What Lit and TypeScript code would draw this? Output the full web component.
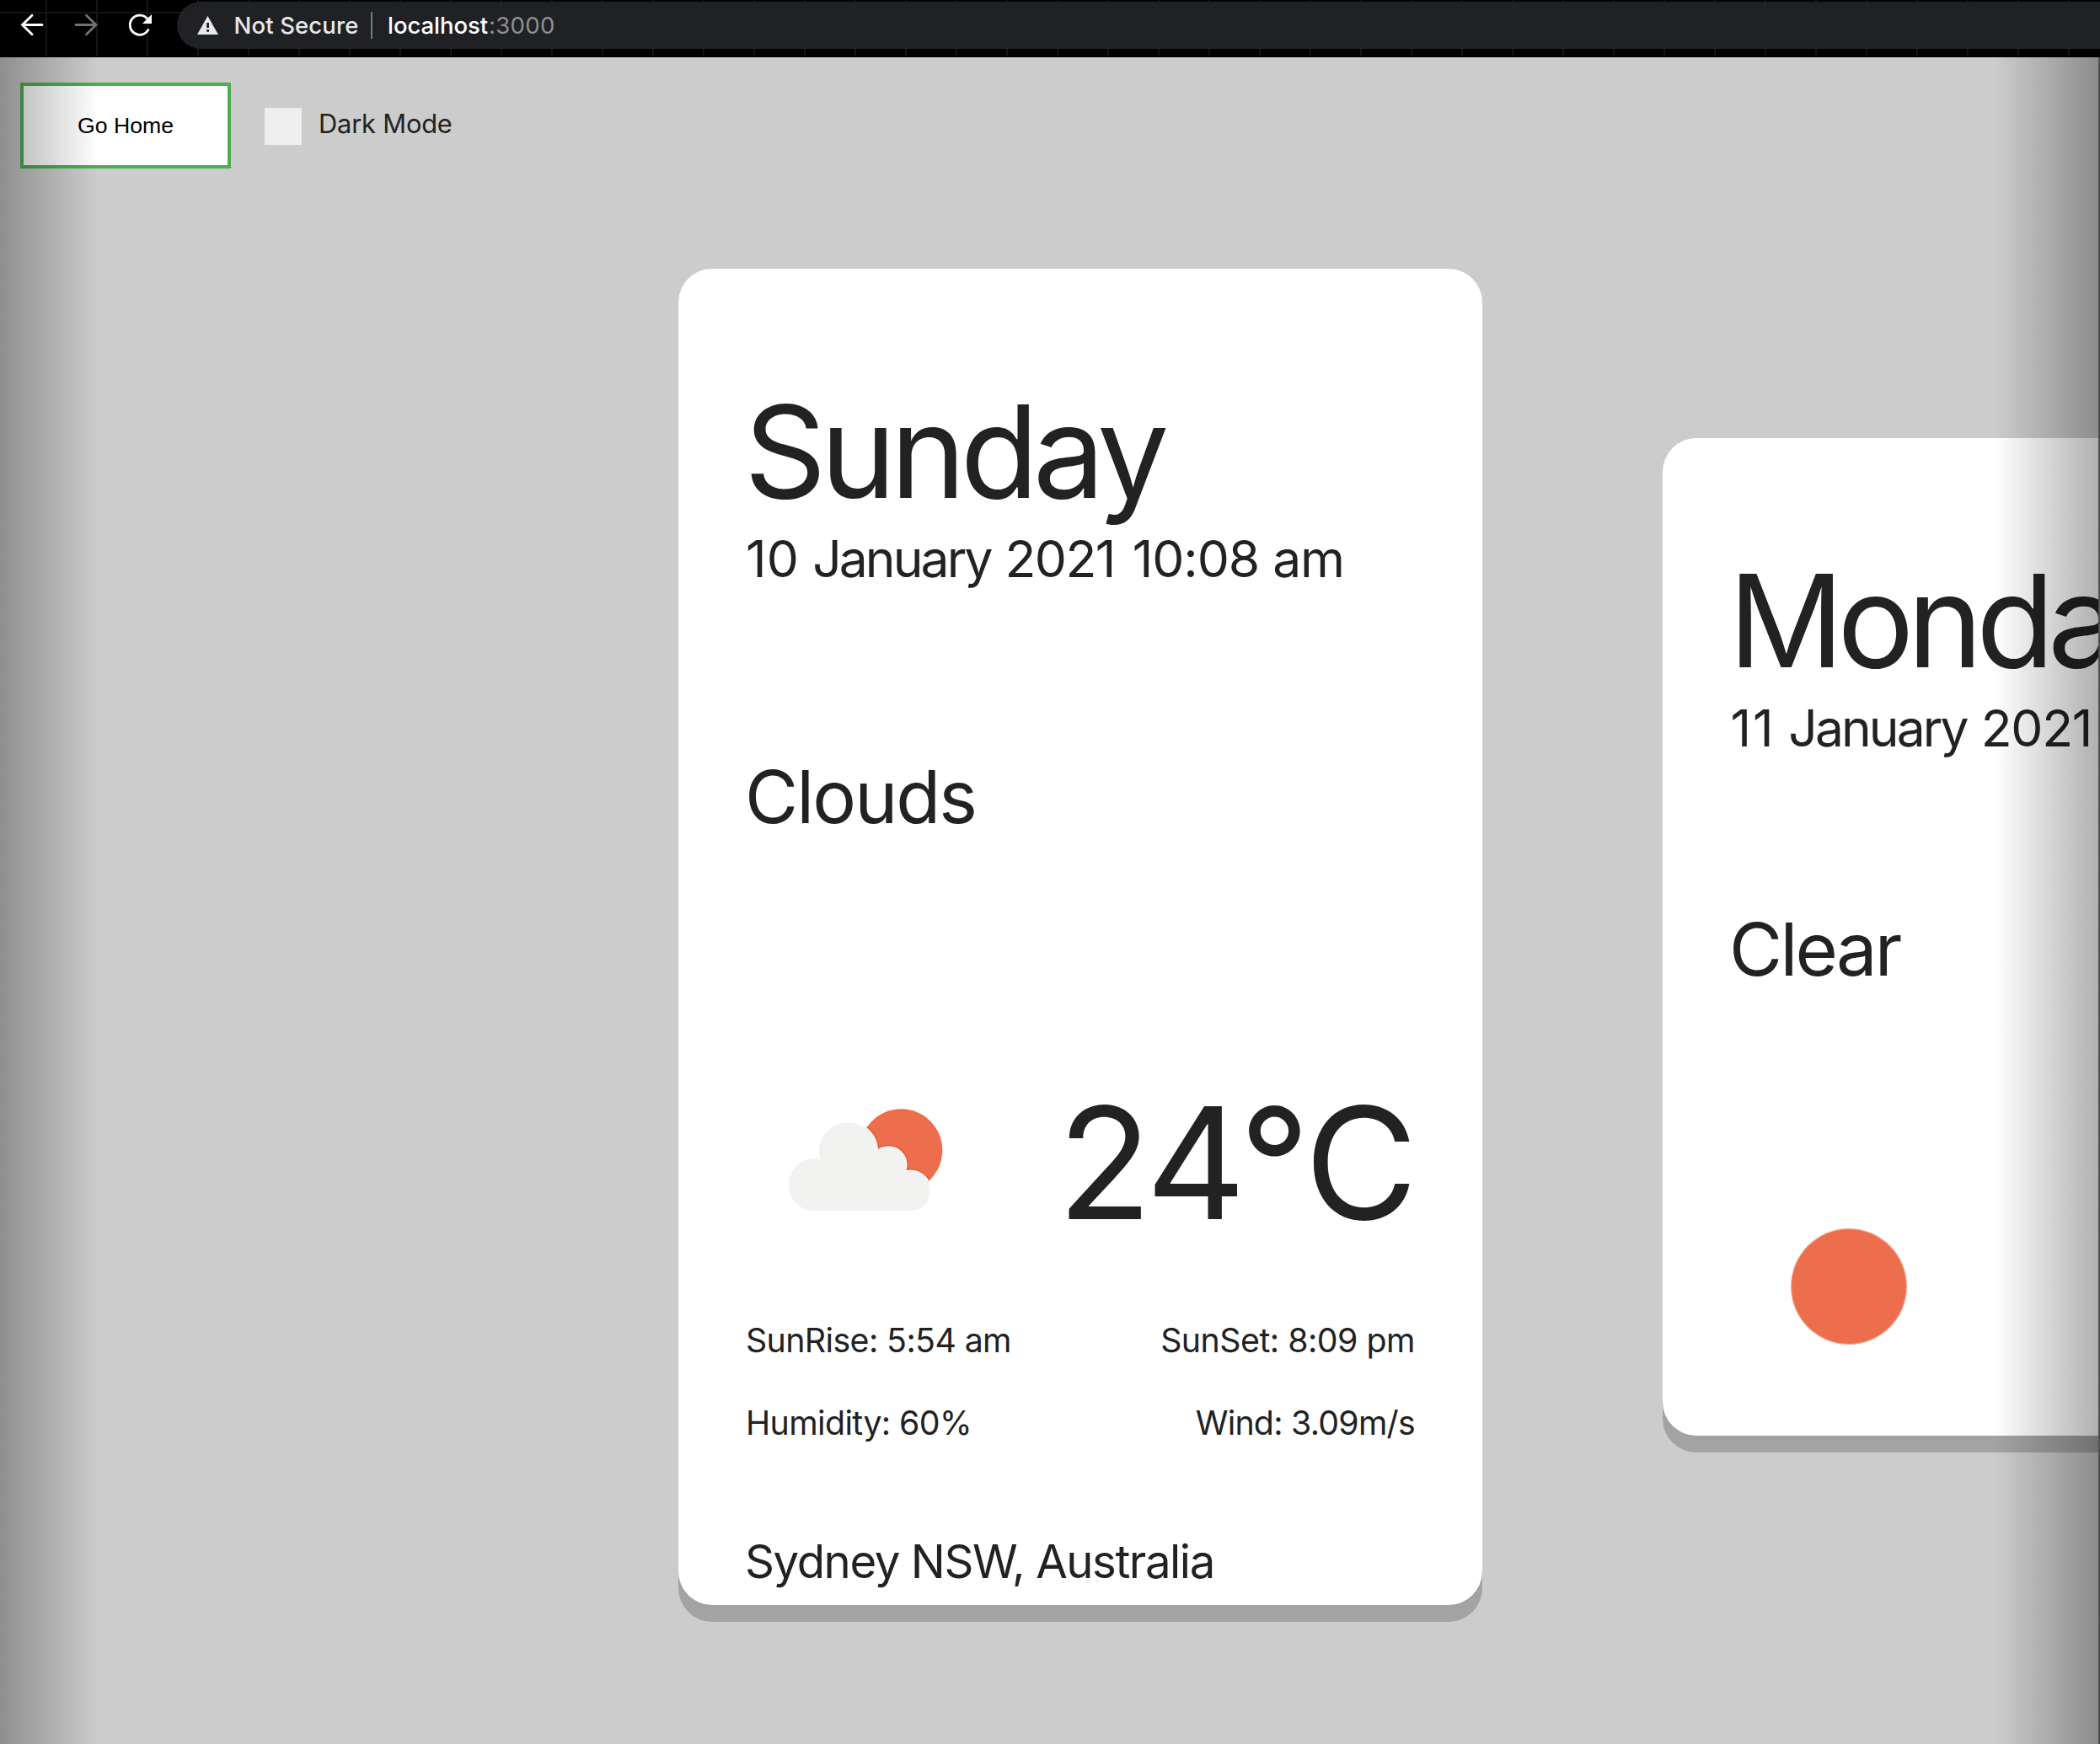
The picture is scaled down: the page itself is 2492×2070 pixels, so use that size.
import { LitElement, html, svg, css } from "lit";
import { customElement, property } from "lit/decorators.js";

interface Forecast {
  key: "sunday" | "monday";
  day: string;
  date: { dayOfMonth: string; month: string; year: string; time?: string };
  summary: string;
  temperature?: string;
  sunrise?: string;
  sunset?: string;
  humidity?: string;
  wind?: string;
  place?: string;
}

const forecasts: Forecast[] = [
  {
    key: "sunday",
    day: "Sunday",
    date: { dayOfMonth: "10", month: "January", year: "2021", time: "10:08 am" },
    summary: "Clouds",
    temperature: "24°C",
    sunrise: "5:54 am",
    sunset: "8:09 pm",
    humidity: "60%",
    wind: "3.09m/s",
    place: "Sydney NSW, Australia",
  },
  {
    key: "monday",
    day: "Monday",
    date: { dayOfMonth: "11", month: "January", year: "2021" },
    summary: "Clear",
  },
];

const cloudShapes = svg`
  <circle cx="200" cy="376" r="93"></circle>
  <circle cx="318" cy="257" r="103"></circle>
  <circle cx="463" cy="304" r="61"></circle>
  <circle cx="541" cy="398" r="70"></circle>
  <rect x="200" y="350" width="341" height="118.5"></rect>
  <rect x="300" y="285" width="163" height="90"></rect>
`;

const cloudySun = html`
  <svg class="icon cloudy" viewBox="0 0 780 570">
    <defs>
      <clipPath id="sun"><circle cx="508" cy="253" r="147"></circle></clipPath>
    </defs>
    <circle cx="508" cy="253" r="147" fill="#ec6e4c"></circle>
    <g clip-path="url(#sun)">
      <g fill="#ea5a36" stroke="#ea5a36" stroke-width="20">${cloudShapes}</g>
      <g fill="#f4fbfa" stroke="#f4fbfa" stroke-width="11">${cloudShapes}</g>
    </g>
    <g fill="#f2f2f0">${cloudShapes}</g>
  </svg>
`;

const clearSun = html`
  <svg class="icon clear" viewBox="0 0 140 140">
    <circle cx="70" cy="70" r="69" fill="#f3a58e"></circle>
    <circle cx="70" cy="70" r="67.8" fill="#ec6e4c"></circle>
  </svg>
`;

@customElement("browser-bar")
export class BrowserBar extends LitElement {
  static styles = css`
    :host {
      display: block;
      height: 68px;
      background:
        linear-gradient(#000, #000) 0 66px / 100% 2px no-repeat,
        linear-gradient(#151515, #151515) 0 14px / 100% 2px no-repeat,
        repeating-linear-gradient(90deg, transparent 0 54px, #151515 54px 56px, transparent 56px 60px),
        #000;
      font-family: Inter, "Liberation Sans", sans-serif;
      overflow: hidden;
    }
    .bar {
      display: flex;
      padding-top: 2px;
    }
    .nav {
      width: 210px;
      height: 56px;
      flex: none;
    }
    .address {
      flex: 1;
      height: 56px;
      border-radius: 28px 0 0 28px;
      background: #202124;
      display: flex;
      align-items: center;
      padding-left: 24px;
      box-sizing: border-box;
      font-size: 27.5px;
      line-height: 56px;
      white-space: pre;
    }
    .warning {
      width: 25px;
      height: 22px;
      margin-right: 18.5px;
    }
    .status {
      color: #e8e8e8;
      font-weight: 500;
      letter-spacing: 0.14px;
      width: 162.5px;
    }
    .divider {
      width: 2px;
      height: 32px;
      background: #77787a;
      margin-right: 18px;
    }
    .host {
      color: #fff;
      font-weight: 500;
      letter-spacing: -0.05px;
      width: 120px;
    }
    .port {
      color: #8f9092;
      letter-spacing: 0.35px;
    }
  `;

  render() {
    return html`
      <div class="bar">
        <svg class="nav" viewBox="0 2 210 56" fill="none" stroke-width="2.8" stroke-linecap="round">
          <path d="M50 29.5H27M38 18.3L26.5 29.5L38 40.7" stroke="#fff"></path>
          <path d="M90 29.5H113M102.5 18.3L114 29.5L102.5 40.7" stroke="#727272"></path>
          <path d="M176.4 34.5A11.6 11.6 0 1 1 175 22.5" stroke="#fff" stroke-linecap="butt"></path>
          <path d="M180 17V28H169Z" fill="#fff"></path>
        </svg>
        <div class="address">
          <svg class="warning" viewBox="0 0 25 22">
            <path d="M12.5 0L25 22H0Z" fill="#e8e8e8"></path>
            <path d="M11.2 8h2.8v6h-2.8zM11.2 16h2.8v2.7h-2.8z" fill="#202124"></path>
          </svg>
          <span class="status">Not Secure</span>
          <span class="divider"></span>
          <span class="host">localhost</span><span class="port">:3000</span>
        </div>
      </div>
    `;
  }
}

@customElement("weather-card")
export class WeatherCard extends LitElement {
  @property({ attribute: false }) forecast!: Forecast;

  static styles = css`
    :host {
      display: block;
      flex: none;
    }
    .card {
      box-sizing: border-box;
      width: 954px;
      padding: 124px 80px 0 79px;
      border-radius: 40px;
      background: #fff;
      box-shadow: 0 20px 0 rgba(0, 0, 0, 0.2);
      color: #222;
      white-space: nowrap;
    }
    .sunday {
      height: 1586px;
    }
    .monday {
      height: 1184px;
    }
    .day {
      font-size: 152px;
      line-height: 186px;
      letter-spacing: -6.9px;
      margin-left: -1px;
    }
    .date {
      font-size: 60.5px;
      line-height: 70px;
      letter-spacing: -1.05px;
      margin-top: -1px;
      margin-left: 1px;
    }
    .number {
      letter-spacing: 0.2px;
    }
    .month {
      letter-spacing: -2.9px;
      margin-right: 1px;
    }
    .year {
      letter-spacing: -1.6px;
      margin-right: 5px;
    }
    .summary {
      font-size: 86.5px;
      line-height: 100px;
      letter-spacing: -1.95px;
      margin-top: 198px;
    }
    .monday .day {
      letter-spacing: -8.1px;
    }
    .monday .date {
      margin-left: 1.5px;
    }
    .monday .number {
      letter-spacing: 1.8px;
    }
    .monday .year {
      letter-spacing: -1.3px;
    }
    .monday .summary {
      letter-spacing: -2.8px;
      margin-top: 178px;
    }
    .reading {
      display: flex;
      justify-content: space-between;
      align-items: flex-start;
      margin-top: 274px;
      height: 220px;
    }
    .monday .reading {
      margin-top: 280px;
    }
    .icon {
      display: block;
      flex: none;
    }
    .cloudy {
      width: 260px;
      height: 190px;
      margin: 11px 0 0 16px;
    }
    .clear {
      width: 140px;
      height: 140px;
      margin-left: 72px;
    }
    .temperature {
      font-size: 184px;
      line-height: 220px;
      letter-spacing: -4.4px;
      margin-right: 1px;
    }
    .stats {
      display: flex;
      flex-direction: column;
      gap: 50px;
      margin: 76.5px 0 0 1px;
      font-size: 39.3px;
      line-height: 48px;
    }
    .row {
      display: flex;
      justify-content: space-between;
    }
    .rise {
      letter-spacing: -0.6px;
    }
    .set {
      letter-spacing: -0.5px;
    }
    .humidity {
      letter-spacing: -0.6px;
    }
    .wind {
      letter-spacing: -0.75px;
    }
    .place {
      margin-top: 108.5px;
      font-size: 54.5px;
      line-height: 64px;
      letter-spacing: -1.43px;
    }
  `;

  render() {
    const f = this.forecast;
    const d = f.date;
    return html`
      <div class="card ${f.key}">
        <div class="day">${f.day}</div>
        <div class="date">
          <span class="number">${d.dayOfMonth}</span>
          <span class="month">${d.month}</span>
          <span class="year">${d.year}</span>
          ${d.time ?? ""}
        </div>
        <div class="summary">${f.summary}</div>
        <div class="reading">
          ${f.key === "sunday" ? cloudySun : clearSun}
          ${f.temperature ? html`<div class="temperature">${f.temperature}</div>` : null}
        </div>
        ${f.place
          ? html`
              <div class="stats">
                <div class="row">
                  <span class="rise">SunRise: ${f.sunrise}</span>
                  <span class="set">SunSet: ${f.sunset}</span>
                </div>
                <div class="row">
                  <span class="humidity">Humidity: ${f.humidity}</span>
                  <span class="wind">Wind: ${f.wind}</span>
                </div>
              </div>
              <div class="place">${f.place}</div>
            `
          : null}
      </div>
    `;
  }
}

@customElement("app-root")
export class AppRoot extends LitElement {
  static styles = css`
    :host {
      display: flex;
      flex-direction: column;
      height: 2070px;
      width: 100%;
      overflow: hidden;
      background: #ccc;
      font-family: Inter, "Liberation Sans", sans-serif;
    }
    browser-bar {
      flex: none;
    }
    .page {
      flex: 1;
      position: relative;
      overflow: hidden;
    }
    .toolbar {
      display: flex;
      align-items: center;
      padding: 30px 24px 0;
    }
    .home {
      box-sizing: border-box;
      width: 250px;
      height: 102px;
      padding: 0;
      border: 4px solid #4caf50;
      border-radius: 0;
      background: #fff;
      color: #000;
      font: 26.67px "Liberation Sans", sans-serif;
    }
    .toggle {
      display: flex;
      align-items: center;
      margin-left: 40px;
      color: #222;
      font-size: 30.8px;
      line-height: 44px;
      letter-spacing: -0.18px;
    }
    .box {
      width: 44px;
      height: 44px;
      margin: 2px 20px 0 0;
      background: #eee;
    }
    .label {
      margin-top: -4px;
    }
    .cards {
      display: flex;
      align-items: center;
      gap: 214px;
      padding: 119px 0 0 805px;
    }
    .shade {
      position: absolute;
      top: 0;
      bottom: 0;
      width: 117px;
      pointer-events: none;
    }
    .left {
      left: 0;
      background: linear-gradient(to right, rgba(0, 0, 0, 0.3), transparent);
    }
    .right {
      right: 2px;
      width: 122px;
      background: linear-gradient(to left, rgba(0, 0, 0, 0.31), transparent);
    }
    .edge {
      right: 0;
      width: 2px;
      background: #505050;
    }
  `;

  render() {
    return html`
      <browser-bar></browser-bar>
      <div class="page">
        <div class="toolbar">
          <button class="home">Go Home</button>
          <label class="toggle"><span class="box"></span><span class="label">Dark Mode</span></label>
        </div>
        <div class="cards">
          ${forecasts.map((f) => html`<weather-card .forecast=${f}></weather-card>`)}
        </div>
        <div class="shade left"></div>
        <div class="shade right"></div>
        <div class="shade edge"></div>
      </div>
    `;
  }
}
